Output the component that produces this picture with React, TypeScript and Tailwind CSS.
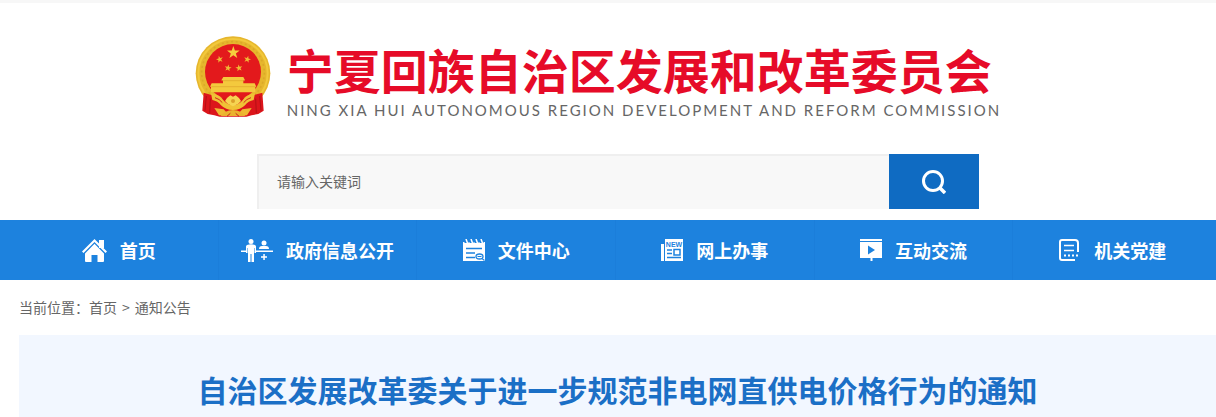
import type { ReactNode } from "react";

interface NavItem {
  label: string;
  icon: ReactNode;
}

const star = (cx: number, cy: number, r: number, turn = 0) =>
  Array.from({ length: 10 }, (_, i) => {
    const a = ((i * 36 - 90 + turn) * Math.PI) / 180;
    const d = i % 2 ? r * 0.4 : r;
    return `${(cx + d * Math.cos(a)).toFixed(1)},${(cy + d * Math.sin(a)).toFixed(1)}`;
  }).join(" ");

const Emblem = () => (
  <svg viewBox="26 18 228 243" className="h-[81px] w-[76px] shrink-0" aria-hidden="true">
    {/* wheat ring */}
    <ellipse cx="140" cy="130" rx="112" ry="111" fill="#e6b62d" />
    <ellipse cx="140" cy="130" rx="104" ry="103" fill="none" stroke="#f2c93c" strokeWidth="6" />
    <ellipse cx="140" cy="128" rx="94" ry="93" fill="none" stroke="#dba928" strokeWidth="5" strokeDasharray="6 8" />
    <circle cx="140" cy="126" r="84" fill="#e3191c" />
    <polygon points={star(141, 68, 20)} fill="#f5cf3d" />
    <polygon points={star(100, 88, 11, -15)} fill="#f0b936" />
    <polygon points={star(183, 88, 11, 15)} fill="#f0b936" />
    <polygon points={star(125, 114, 11, 10)} fill="#f0b936" />
    <polygon points={star(158, 114, 11, -10)} fill="#f0b936" />
    {/* gate */}
    <path d="M111 141h60l5 10h-5v9h34l5 10h-3v17H74v-17h-3l5-10h34v-9h-5z" fill="#f4c93d" />
    <path d="M106 152h69M75 170h131" stroke="#e0a52a" strokeWidth="2" />
    {/* drapes */}
    <path d="M52 188l34 10 54 10 54-10 34-10 4 54-16 10-20 4-16 4h-80l-16-4-20-4-16-10z" fill="#dc151b" />
    <path d="M60 198l-4 44M72 206l-2 44M220 198l4 44M208 206l2 44" stroke="#b50f15" strokeWidth="3" />
    <path d="M74 190q28 5 36 19 12 16 30 16t30-16q8-14 36-19l-4 20q-16 3-26 16-14 14-36 14t-36-14q-10-13-26-16z" fill="#f0c236" />
    <path d="M86 203q14 4 22 15m86-15q-14 4-22 15" fill="none" stroke="#d02a1c" strokeWidth="3" />
    <path d="M84 234l28 4 16 18H98zM196 234l-28 4-16 18h30z" fill="#efb832" />
    <path d="M122 204l10-8 8 4 8-4 10 8 6 9-8 8-16 8-16-8-8-8z" fill="#f6d452" />
    <circle cx="140" cy="213" r="6" fill="#dca02a" />
    <path d="M116 246q24-12 48 0l14 12h-76z" fill="#eab32f" />
    <path d="M132 250l-10 9M148 250l10 9" stroke="#c8181a" strokeWidth="3" />
  </svg>
);

const HomeIcon = () => (
  <svg viewBox="0 0 25 23" className="h-[23px] w-[25px]" fill="currentColor" aria-hidden="true">
    <path d="M17 1h5v8h-5z" />
    <path d="M0 12.500L12.500 0 25 12.500l-1.500 1.500L12.500 3 1.500 14z" />
    <path d="M12.500 4.800L22 14.400V22q0 1-1 1h-5.500v-7h-6v7H4q-1 0-1-1v-7.600z" />
  </svg>
);

const CounterIcon = () => (
  <svg viewBox="0 0 32 23" className="h-[23px] w-8" fill="currentColor" aria-hidden="true">
    <circle cx="10" cy="2.500" r="2.500" />
    <path d="M6 6q4-1.500 8 0 1 .5 1 1.500V14h-1.500V9H13v14h-2.500v-8h-1v8H7V9h-.5v5H5V7.500Q5 6.500 6 6z" />
    <path d="M0 11.500h5v1.500H0zM15 11.500h17v1.500H15z" />
    <circle cx="23" cy="4" r="2.500" />
    <path d="M18 10q0-3 3-3h4q3 0 3 3zM22.300 15h1.500v2.200H26v1.500h-2.200V21h-1.500v-2.300H20v-1.500h2.300z" />
  </svg>
);

const NotepadIcon = () => (
  <svg viewBox="0 0 22 22" className="size-[22px]" aria-hidden="true">
    <path d="M0 3h22v19H0z" fill="currentColor" />
    <path d="M3.500 0v4M8.500 0v4M13.500 0v4M18.500 0v4" stroke="#1d82de" strokeWidth="4" />
    <path d="M3 0l1.500 4M8 0l1.500 4M13 0l1.500 4M18 0l1.500 4" stroke="currentColor" strokeWidth="1.500" />
    <path d="M3 9.500h16M3 14h9M3 18.500h9" stroke="#1d82de" strokeWidth="1.500" />
    <ellipse cx="16.500" cy="17.500" rx="3.500" ry="2.500" fill="none" stroke="#1d82de" strokeWidth="1.300" />
    <path d="M14.500 17.500h4M19 19.500l2.500 2" stroke="#1d82de" strokeWidth="1.200" />
  </svg>
);

const NewsIcon = () => (
  <svg viewBox="0 0 22 22" className="size-[22px]" aria-hidden="true">
    <path d="M0 5h3v17H0zM4 0h18v22H4z" fill="currentColor" />
    <text x="13" y="8" textAnchor="middle" fontSize="7" fontWeight="700" fill="#1d82de" fontFamily="Liberation Sans, sans-serif">
      NEW
    </text>
    <path d="M6 11h5M6 14.500h5M6 18.500h14" stroke="#1d82de" strokeWidth="1.500" />
    <path d="M13 10.500h6v5.500h-6z" fill="none" stroke="#1d82de" strokeWidth="1.500" />
  </svg>
);

const VideoIcon = () => (
  <svg viewBox="0 0 22 22" className="size-[22px]" aria-hidden="true">
    <path d="M0 0h22v2H0zM0 3h22v16H12.500v3h-2v-3H0z" fill="currentColor" />
    <path d="M8 6.500l7 4.500-7 4.500z" fill="#1d82de" />
  </svg>
);

const DocIcon = () => (
  <svg viewBox="0 0 22 22" className="size-[22px]" fill="none" stroke="currentColor" strokeWidth="2" aria-hidden="true">
    <path d="M19 13V4q0-3-3-3H3Q1 1 1 3v16q0 2 2 2h13" />
    <path d="M5 6.500h10M5 11.500h10" strokeWidth="1.500" />
    <path d="M5 16.500h16" strokeDasharray="2 2" />
  </svg>
);

const SearchIcon = () => (
  <svg viewBox="0 0 24 24" className="size-6" fill="none" stroke="currentColor" aria-hidden="true">
    <circle cx="11" cy="11" r="9.500" strokeWidth="3" />
    <path d="M17.500 17.500l5.500 5.500" strokeWidth="3.500" />
  </svg>
);

const navItems: NavItem[] = [
  { label: "首页", icon: <HomeIcon /> },
  { label: "政府信息公开", icon: <CounterIcon /> },
  { label: "文件中心", icon: <NotepadIcon /> },
  { label: "网上办事", icon: <NewsIcon /> },
  { label: "互动交流", icon: <VideoIcon /> },
  { label: "机关党建", icon: <DocIcon /> },
];

const App = () => (
  <div className="bg-white font-['Noto_Sans_CJK_SC',sans-serif] text-sm text-[#666]">
    <div className="h-[3px] bg-[#f7f7f7]" />

    <header className="pt-[33px]">
      <div className="flex justify-center gap-4 pr-5">
        <Emblem />
        <div className="pt-2">
          <h1 className="text-[47px] leading-[50px] font-bold whitespace-nowrap text-[#e60b28]">
            宁夏回族自治区发展和改革委员会
          </h1>
          <p className="mt-1.5 font-[Lato,sans-serif] text-[15px] leading-5 tracking-[2px] whitespace-nowrap text-[#666]">
            NING XIA HUI AUTONOMOUS REGION DEVELOPMENT AND REFORM COMMISSION
          </p>
        </div>
      </div>

      <form className="mt-[34px] flex justify-center pl-5" onSubmit={(e) => e.preventDefault()}>
        <input
          type="text"
          aria-label="请输入关键词"
          placeholder="请输入关键词"
          className="h-[55px] w-[632px] border-t-2 border-l-2 border-[#efefef] bg-[#f8f8f8] px-[18px] pb-1 text-sm outline-none placeholder:text-[#666]"
        />
        <button type="submit" aria-label="搜索" className="flex h-[55px] w-[90px] items-center justify-center bg-[#0f6bc2] text-white">
          <SearchIcon />
        </button>
      </form>
    </header>

    <nav className="mt-[11px] bg-[#1d82de]">
      <ul className="grid grid-cols-6 pr-1 pl-5">
        {navItems.map((item) => (
          <li key={item.label} className="border-r border-[#1b7eda] last:border-r-0">
            <a href="#" className="flex h-[60px] items-center justify-center gap-[13px] text-lg font-bold whitespace-nowrap text-white">
              {item.icon}
              {item.label}
            </a>
          </li>
        ))}
      </ul>
    </nav>

    <main className="pl-[19px]">
      <div className="flex h-[55px] items-center pb-0.5">
        <span>当前位置：</span>
        <a href="#">首页</a>
        <span className="px-[5px]">&gt;</span>
        <a href="#">通知公告</a>
      </div>
      <article className="bg-[#f2f7ff] pt-[34px] pb-2">
        <h2 className="text-center text-[30px] leading-10 font-bold text-[#1b6fc6]">
          自治区发展改革委关于进一步规范非电网直供电价格行为的通知
        </h2>
      </article>
    </main>
  </div>
);

export default App;
